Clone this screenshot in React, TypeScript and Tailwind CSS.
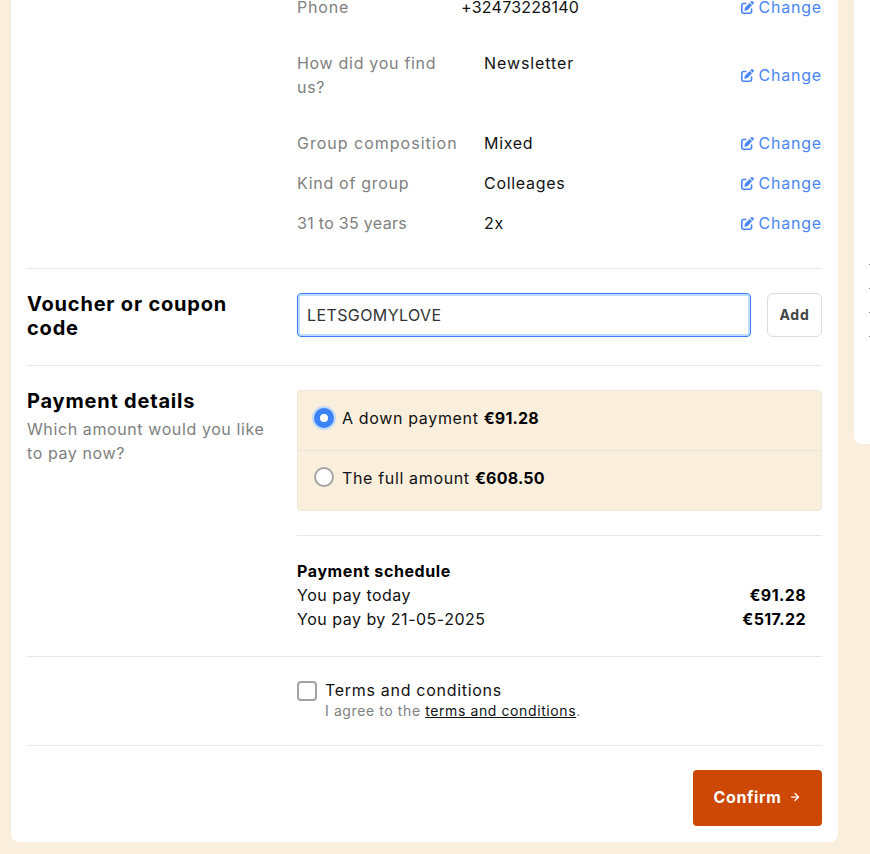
import { FaPenToSquare } from 'react-icons/fa6';
import { ArrowRight } from 'lucide-react';

const rows = [
  { label: 'Group composition', value: 'Mixed', labelClass: 'tracking-[1px]' },
  { label: 'Kind of group', value: 'Colleages', labelClass: 'tracking-[0.7px]' },
  { label: '31 to 35 years', value: '2x', labelClass: 'tracking-[0.3px]' },
];

function ChangeLink() {
  return (
    <a className="flex items-center gap-1 text-[#4a86f7] tracking-[0.8px]">
      <FaPenToSquare className="w-[13px] h-[13px]" />
      Change
    </a>
  );
}

export default function App() {
  return (
    <div className="h-[854px] overflow-hidden bg-[#faefdd] flex gap-4 pl-[11px] font-['Inter',sans-serif] text-[16px] leading-6 text-[#111111]">
      <div className="w-[827px] h-[842px] shrink-0 bg-white rounded-b-lg px-4 flex flex-col">
        <div className="flex">
          <div className="w-[270px] shrink-0" />
          <div className="flex-1 pb-[33px]">
            <div className="flex items-center h-6 -mt-[5px] mb-[32px]">
              <span className="w-[164px] text-[#808080] tracking-[0.8px]">Phone</span>
              <span className="flex-1 tracking-[0.25px]">+32473228140</span>
              <ChangeLink />
            </div>
            <div className="flex items-center mb-[32px]">
              <span className="w-[187px] pr-[30px] text-[#808080] tracking-[0.7px]">How did you find us?</span>
              <span className="flex-1 self-start tracking-[0.9px]">Newsletter</span>
              <ChangeLink />
            </div>
            <div className="flex flex-col gap-4">
              {rows.map((row) => (
                <div key={row.label} className="flex items-center h-6">
                  <span className={`w-[187px] text-[#808080] ${row.labelClass}`}>{row.label}</span>
                  <span className="flex-1 tracking-[0.7px]">{row.value}</span>
                  <ChangeLink />
                </div>
              ))}
            </div>
          </div>
        </div>

        <div className="border-t border-[#e7e7e7] flex pt-6 pb-7 h-[97px]">
          <h2 className="w-[270px] shrink-0 pr-10 -mt-px text-[20px] font-bold text-black leading-6 tracking-[0.8px]">Voucher or coupon code</h2>
          <div className="flex-1 flex gap-4">
            <input
              readOnly
              value="LETSGOMYLOVE"
              className="w-[454px] h-11 rounded border border-[#3b82f6] px-[9px] ring-2 ring-inset ring-[#bfdbfe] outline-none tracking-[0.4px] text-[#333333]"
            />
            <button className="flex-1 h-11 rounded-md border border-[#dcdcdc] text-[14px] font-bold text-[#444444] tracking-[0.8px]">Add</button>
          </div>
        </div>

        <div className="border-t border-[#e7e7e7] flex pt-6">
          <div className="w-[270px] shrink-0 -mt-px">
            <h2 className="text-[20px] font-bold text-black leading-6 tracking-[0.8px]">Payment details</h2>
            <p className="mt-1 pr-6 text-[#808080] tracking-[0.6px]">Which amount would you like to pay now?</p>
          </div>
          <div className="flex-1">
            <div className="h-[121px] rounded border border-[#eee7da] bg-[#faefdd] flex flex-col">
              <label className="h-[60px] border-b border-[#e9e5dc] flex items-center gap-2 pl-4 pb-[5px]">
                <span className="w-5 h-5 rounded-full bg-[#3b82f6] ring-2 ring-[#bfdbfe] flex items-center justify-center">
                  <span className="w-2 h-2 rounded-full bg-white" />
                </span>
                <span className="tracking-[0.65px]">A down payment <b className="text-black tracking-[0.2px]">€91.28</b></span>
              </label>
              <label className="flex-1 flex items-center gap-2 pl-4 pb-[7px]">
                <span className="w-5 h-5 rounded-full bg-white border-2 border-[#a3a3a3]" />
                <span className="pt-[2px] tracking-[0.65px]">The full amount <b className="text-black tracking-[0.2px]">€608.50</b></span>
              </label>
            </div>
            <div className="mt-6 border-t border-[#e7e7e7] pt-[23px] pb-[25px] pr-4">
              <div className="font-bold text-black tracking-[0.6px]">Payment schedule</div>
              <div className="flex justify-between tracking-[0.5px]"><span>You pay today</span><b className="text-black tracking-[0.4px]">€91.28</b></div>
              <div className="flex justify-between tracking-[0.5px]"><span>You pay by 21-05-2025</span><b className="text-black tracking-[0.4px]">€517.22</b></div>
            </div>
          </div>
        </div>

        <div className="border-t border-[#e7e7e7] flex pt-[23px] pb-4 h-[89px]">
          <div className="w-[270px] shrink-0" />
          <div className="flex gap-2">
            <span className="w-5 h-5 mt-[1px] rounded border-2 border-[#a3a3a3] bg-white" />
            <div>
              <div className="leading-5 tracking-[0.7px]">Terms and conditions</div>
              <div className="text-[14px] leading-[22px] text-[#808080] tracking-[0.6px]">
                I agree to the <a className="underline text-[#111111]">terms and conditions</a>.
              </div>
            </div>
          </div>
        </div>

        <div className="border-t border-[#e7e7e7] pt-6 flex justify-end">
          <button className="w-[129px] h-14 rounded bg-[#cc4804] text-white font-bold flex items-center justify-center gap-2 pb-[2px] tracking-[0.6px]">
            Confirm
            <ArrowRight className="w-3 h-3" strokeWidth={2.5} />
          </button>
        </div>
      </div>

      <aside className="w-[40px] h-[444px] bg-white rounded-bl-lg pl-[15px] pt-[264px] flex flex-col gap-[23px]">
        <span className="w-px h-px bg-[#888888]" />
        <span className="w-px h-px bg-[#888888]" />
        <span className="w-px h-px bg-[#888888]" />
        <span className="w-px h-px bg-[#888888]" />
      </aside>
    </div>
  );
}
